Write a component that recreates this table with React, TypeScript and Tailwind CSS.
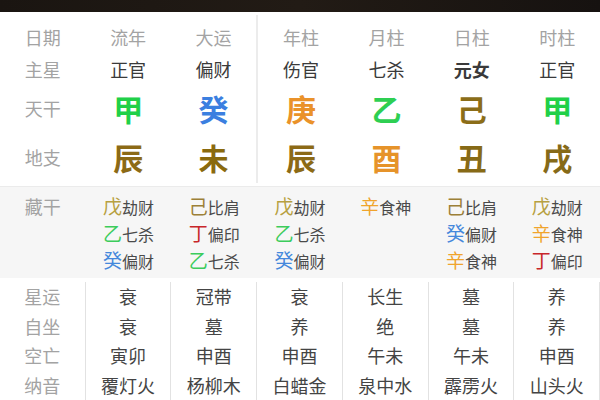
const FONT = { fontFamily: '"Noto Sans CJK SC", "Noto Sans", sans-serif' };

const STEM_COLOR: Record<string, string> = {
  甲: "text-[#20d048]",
  乙: "text-[#2ecf52]",
  癸: "text-[#3b7fe0]",
  庚: "text-[#ea922a]",
  己: "text-[#8b6d18]",
  辰: "text-[#8c6a16]",
  未: "text-[#8a6a0e]",
  酉: "text-[#e6932a]",
  丑: "text-[#876a16]",
  戌: "text-[#866a18]",
};

const HIDDEN_COLOR: Record<string, string> = {
  戊: "text-[#b7a040]",
  己: "text-[#9c8038]",
  乙: "text-[#3ccc5c]",
  癸: "text-[#4588dc]",
  丁: "text-[#c8262a]",
  辛: "text-[#f0a42c]",
};

const pillars = [
  { head: "流年", star: "正官", stem: "甲", branch: "辰", hidden: [["戊", "劫财"], ["乙", "七杀"], ["癸", "偏财"]], xy: "衰", zz: "衰", kw: "寅卯", ny: "覆灯火" },
  { head: "大运", star: "偏财", stem: "癸", branch: "未", hidden: [["己", "比肩"], ["丁", "偏印"], ["乙", "七杀"]], xy: "冠带", zz: "墓", kw: "申酉", ny: "杨柳木" },
  { head: "年柱", star: "伤官", stem: "庚", branch: "辰", hidden: [["戊", "劫财"], ["乙", "七杀"], ["癸", "偏财"]], xy: "衰", zz: "养", kw: "申酉", ny: "白蜡金" },
  { head: "月柱", star: "七杀", stem: "乙", branch: "酉", hidden: [["辛", "食神"]], xy: "长生", zz: "绝", kw: "午未", ny: "泉中水" },
  { head: "日柱", star: "元女", stem: "己", branch: "丑", hidden: [["己", "比肩"], ["癸", "偏财"], ["辛", "食神"]], xy: "墓", zz: "墓", kw: "午未", ny: "霹雳火" },
  { head: "时柱", star: "正官", stem: "甲", branch: "戌", hidden: [["戊", "劫财"], ["辛", "食神"], ["丁", "偏印"]], xy: "养", zz: "养", kw: "申酉", ny: "山头火" },
];

const Label = ({ children }: { children: React.ReactNode }) => (
  <div className="text-[18px] text-[#a3a3a3]">{children}</div>
);

export default function App() {
  return (
    <div className="w-[600px] h-[400px] overflow-hidden bg-white" style={FONT}>
      <div className="h-[12px] bg-gradient-to-r from-[#1a1511] via-[#221b15] to-[#161210]" />

      {/* upper pillars */}
      <div className="flex h-[174px] py-[3px]">
        <div className="flex-1 flex flex-col items-center pt-[6px]">
          <div className="h-[32px] flex items-center"><Label>日期</Label></div>
          <div className="h-[32px] flex items-center"><Label>主星</Label></div>
          <div className="h-[46px] flex items-center"><Label>天干</Label></div>
          <div className="h-[52px] flex items-center"><Label>地支</Label></div>
        </div>
        {pillars.map((p, i) => (
          <div
            key={i}
            className={`flex-1 flex flex-col items-center pt-[6px] ${i === 2 ? "border-l-2 border-[#ececec]" : ""}`}
          >
            <div className="h-[32px] flex items-center"><Label>{p.head}</Label></div>
            <div className="h-[32px] flex items-center">
              <div className={`text-[18px] text-[#3a3a3a] ${p.star === "元女" ? "font-bold" : ""}`}>{p.star}</div>
            </div>
            <div className="h-[46px] flex items-center">
              <div className={`text-[30px] font-bold leading-none ${STEM_COLOR[p.stem]}`}>{p.stem}</div>
            </div>
            <div className="h-[52px] flex items-center">
              <div className={`text-[30px] font-bold leading-none ${STEM_COLOR[p.branch]}`}>{p.branch}</div>
            </div>
          </div>
        ))}
      </div>

      {/* hidden stems */}
      <div className="flex h-[92px] bg-[#f6f6f6] border-t border-[#ebebeb] pt-[6px]">
        <div className="flex-1 flex justify-center">
          <div className="h-[27px] flex items-center"><Label>藏干</Label></div>
        </div>
        {pillars.map((p, i) => (
          <div key={i} className="flex-1 flex justify-center">
            <div className="flex flex-col items-start">
              {p.hidden.map(([s, g], j) => (
                <div key={j} className="h-[27px] flex items-center">
                  <span className={`text-[19px] ${HIDDEN_COLOR[s]}`}>{s}</span>
                  <span className="text-[16px] text-[#4a4a4a]">{g}</span>
                </div>
              ))}
            </div>
          </div>
        ))}
      </div>

      {/* lower rows */}
      <div className="flex h-[122px] pt-[4px]">
        <div className="flex-1 flex flex-col items-center border-r border-[#e2e2e2]">
          {["星运", "自坐", "空亡", "纳音"].map((t) => (
            <div key={t} className="h-[31.5px] flex items-center"><Label>{t}</Label></div>
          ))}
        </div>
        {pillars.map((p, i) => (
          <div key={i} className="flex-1 flex flex-col items-center border-r border-[#e2e2e2]">
            {[p.xy, p.zz, p.kw, p.ny].map((t, j) => (
              <div key={j} className="h-[31.5px] flex items-center">
                <div className="text-[18px] text-[#444]">{t}</div>
              </div>
            ))}
          </div>
        ))}
      </div>
    </div>
  );
}
